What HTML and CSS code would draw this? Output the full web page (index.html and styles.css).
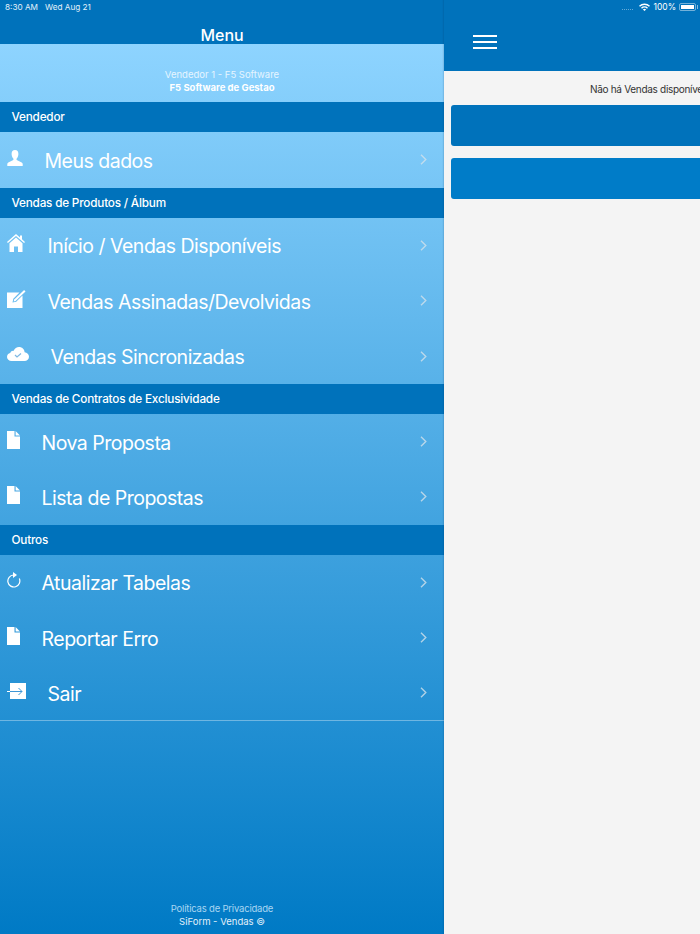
FILE: index.html
```html
<!DOCTYPE html>
<html lang="pt">
<head>
<meta charset="utf-8">
<title>SiForm - Vendas</title>
<link rel="stylesheet" href="styles.css">
</head>
<body>
<svg class="defs" width="0" height="0" aria-hidden="true">
  <symbol id="chev" viewBox="0 0 7 11"><path d="M1 .8 5.800 5.500 1 10.200" fill="none" stroke="currentColor" stroke-width="1.400"/></symbol>
  <symbol id="file" viewBox="0 0 13 18"><path d="M0 0h7.500v5.500H13V18H0z" fill="#fff"/><path d="M8.600 0 13 4.400H8.600z" fill="#fff"/></symbol>
</svg>
<div class="app">
  <aside class="menu">
    <header class="menu-head">
      <div class="status-left"><span>8:30 AM</span><span>Wed Aug 21</span></div>
      <h1 class="menu-title">Menu</h1>
    </header>
    <div class="profile">
      <div class="profile-name">Vendedor 1 - F5 Software</div>
      <div class="profile-company">F5 Software de Gestao</div>
    </div>

    <h2 class="section">Vendedor</h2>
    <a class="row row-45">
      <span class="ico"><svg width="16" height="16" viewBox="0 0 16 16"><path d="M8 0c2.300 0 3.400 1.700 3.400 3.900 0 1.900-.8 3.500-1.700 4.500-.4.500-.2 1.500.5 1.900l4.500 2.300c.7.400 1 .9 1 1.500V16H.3v-1.900c0-.6.300-1.100 1-1.500l4.500-2.300c.7-.4.900-1.400.5-1.900-.9-1-1.700-2.600-1.700-4.500C4.600 1.700 5.700 0 8 0z" fill="#fff"/></svg></span>
      <span class="label">Meus dados</span>
      <svg class="chev" width="7" height="11"><use href="#chev"/></svg>
    </a>

    <h2 class="section">Vendas de Produtos / Álbum</h2>
    <a class="row row-48">
      <span class="ico"><svg width="18" height="18" viewBox="0 0 18 18"><path d="M9 0 0 8l.9 1L9 1.900 17.100 9l.9-1-3-2.700V1.500h-2v2z" fill="#fff"/><path d="M9 3.400 2.500 9.200V18H7v-5.500h4V18h4.500V9.200z" fill="#fff"/></svg></span>
      <span class="label">Início / Vendas Disponíveis</span>
      <svg class="chev" width="7" height="11"><use href="#chev"/></svg>
    </a>
    <a class="row row-48">
      <span class="ico"><svg width="19" height="18" viewBox="0 0 19 18"><path d="M0 2.500h12.500L6.300 8.800 5.500 12.500l3.700-.8 6.300-6.200V18H0z" fill="#fff"/><path d="m7.200 9.400 9.900-9.400 1.400 1.400-9.900 9.500-2 .5z" fill="#fff"/></svg></span>
      <span class="label">Vendas Assinadas/Devolvidas</span>
      <svg class="chev" width="7" height="11"><use href="#chev"/></svg>
    </a>
    <a class="row row-51">
      <span class="ico"><svg width="22" height="14" viewBox="0 0 22 14"><path d="M4.500 14C2 14 0 12.300 0 10c0-2 1.400-3.500 3.200-3.900C3.800 4.300 5.300 3.600 6.500 3.900 7.700 1.500 9.700 0 12 0c3 0 5.400 2.200 5.600 5.200 2.500.3 4.400 2.200 4.400 4.500 0 2.400-2 4.300-4.500 4.300z" fill="#fff"/><path d="m8 8 2 2 4-3.500" fill="none" stroke="#7fb8e2" stroke-width="1.200"/></svg></span>
      <span class="label">Vendas Sincronizadas</span>
      <svg class="chev" width="7" height="11"><use href="#chev"/></svg>
    </a>

    <h2 class="section">Vendas de Contratos de Exclusividade</h2>
    <a class="row row-42">
      <span class="ico"><svg width="13" height="18"><use href="#file"/></svg></span>
      <span class="label">Nova Proposta</span>
      <svg class="chev" width="7" height="11"><use href="#chev"/></svg>
    </a>
    <a class="row row-42">
      <span class="ico"><svg width="13" height="18"><use href="#file"/></svg></span>
      <span class="label">Lista de Propostas</span>
      <svg class="chev" width="7" height="11"><use href="#chev"/></svg>
    </a>

    <h2 class="section">Outros</h2>
    <a class="row row-42">
      <span class="ico"><svg width="14" height="16" viewBox="0 0 14 16"><path d="M6.500 3A6 6 0 1 0 12.300 6.500" fill="none" stroke="#fff" stroke-width="1.200"/><path d="M6 0 10 3 6 6z" fill="#fff"/></svg></span>
      <span class="label">Atualizar Tabelas</span>
      <svg class="chev" width="7" height="11"><use href="#chev"/></svg>
    </a>
    <a class="row row-42">
      <span class="ico"><svg width="13" height="18"><use href="#file"/></svg></span>
      <span class="label">Reportar Erro</span>
      <svg class="chev" width="7" height="11"><use href="#chev"/></svg>
    </a>
    <a class="row row-48 row-last">
      <span class="ico"><svg width="19" height="16" viewBox="0 0 19 16"><rect x="3" y="0" width="16" height="16" fill="#fff"/><path d="M3 8.500h12M11.500 5 15 8.500 11.500 12" fill="none" stroke="#3f97d6" stroke-width="1"/><path d="M0 8.500h3" stroke="#fff" stroke-width="1"/></svg></span>
      <span class="label">Sair</span>
      <svg class="chev" width="7" height="11"><use href="#chev"/></svg>
    </a>

    <footer class="foot">
      <div class="foot-link">Políticas de Privacidade</div>
      <div>SiForm - Vendas ©</div>
    </footer>
  </aside>

  <main class="panel">
    <header class="panel-head">
      <button class="burger" aria-label="Menu"><i></i><i></i><i></i></button>
    </header>
    <p class="empty">Não há Vendas disponíveis</p>
    <div class="card card-dark"></div>
    <div class="card card-light"></div>
  </main>

  <div class="status-right">
    <span class="dots"></span>
    <svg width="11" height="8" viewBox="0 0 11 8"><path d="M0 2.800A7.800 7.800 0 0 1 11 2.800L10 3.800A6.400 6.400 0 0 0 1 3.800zM2 4.800A5 5 0 0 1 9 4.800L8 5.800A3.600 3.600 0 0 0 3 5.800zM3.900 6.600A2.300 2.300 0 0 1 7.100 6.600L5.500 8z" fill="#fff"/></svg>
    <span>100%</span>
    <span class="battery"><i></i></span>
  </div>
</div>
</body>
</html>
```
FILE: styles.css
```css
* { box-sizing: border-box; }
html, body { margin: 0; padding: 0; }
body {
  width: 700px;
  height: 934px;
  overflow: hidden;
  font-family: Inter, "Liberation Sans", sans-serif;
  color: #fff;
  background: #f4f4f4;
}
.defs { position: absolute; }
.app { position: relative; display: flex; width: 700px; height: 934px; overflow: hidden; }

.menu {
  flex: 0 0 444px;
  height: 934px;
  display: flex;
  flex-direction: column;
  background: linear-gradient(180deg, #8ed4ff 44px, #007ac5 100%);
}
.menu-head { height: 44px; background: #0072bb; position: relative; }
.status-left {
  display: flex;
  gap: 7px;
  padding: 2px 0 0 5px;
  font-size: 8.200px;
  line-height: 11px;
  color: #e3f1fa;
}
.menu-title {
  margin: 0;
  padding-top: 14px;
  text-align: center;
  font-size: 16px;
  line-height: 16px;
  font-weight: 500;
}
.profile {
  height: 58px;
  padding-top: 25px;
  text-align: center;
  font-size: 9.500px;
  line-height: 12.500px;
}
.profile-name { color: #e6f5ff; }
.profile-company { font-weight: 700; }
.section {
  margin: 0;
  height: 30.200px;
  padding-left: 11.500px;
  background: #0072bb;
  font-size: 11.750px;
  line-height: 31px;
  font-weight: 500;
  letter-spacing: -.2px;
}
.row {
  position: relative;
  display: flex;
  align-items: center;
  height: 55.330px;
  padding-right: 17px;
}
.row-last { border-bottom: 1px solid rgba(255,255,255,.35); }
.ico { display: flex; padding-left: 7px; margin-top: -4px; }
.row-45 .ico { width: 45px; }
.row-48 .ico { width: 48px; }
.row-51 .ico { width: 51px; }
.row-42 .ico { width: 42px; }
.label { flex: 1; margin: 2px 0 0 -.5px; font-size: 19.500px; line-height: 24px; letter-spacing: -.5px; }
.chev { color: rgba(210,225,235,.8); margin-top: 0; }

.foot {
  margin-top: auto;
  padding-bottom: 6px;
  text-align: center;
  font-size: 9.500px;
  line-height: 12.500px;
  color: #e0f0fa;
}
.foot-link { color: #a9d6f2; letter-spacing: -.2px; }

.panel {
  flex: 0 0 444px;
  height: 934px;
  background: #f4f4f4;
  box-shadow: -1px 0 1px rgba(0,40,80,.12);
  position: relative;
}
.panel-head {
  height: 71px;
  background: #0072bb;
  padding: 35px 0 0 29px;
}
.burger {
  display: flex;
  flex-direction: column;
  gap: 4px;
  width: 24px;
  padding: 0;
  border: 0;
  background: none;
}
.burger i { display: block; width: 24px; height: 2px; background: #fff; }
.empty {
  margin: 0;
  height: 34px;
  padding: 12px 0 0 146px;
  font-size: 10px;
  line-height: 13px;
  letter-spacing: -.3px;
  white-space: nowrap;
  color: #333;
}
.card { height: 41px; margin: 0 0 12px 7px; border-radius: 3px; }
.card-dark { background: #0072bb; }
.card-light { background: #007cc8; }

.status-right {
  position: absolute;
  top: 1px;
  right: 4px;
  display: flex;
  align-items: center;
  gap: 3px;
  height: 12px;
  font-size: 8.500px;
}
.dots { width: 11px; height: 1px; margin: 4px 3px 0 0; border-top: 1px dotted rgba(255,255,255,.4); }
.battery {
  position: relative;
  display: block;
  width: 17px;
  height: 8px;
  padding: 1px;
  border: 1px solid rgba(255,255,255,.45);
  border-radius: 2px;
}
.battery::after {
  content: "";
  position: absolute;
  top: 1px;
  right: -3px;
  width: 1px;
  height: 4px;
  background: rgba(255,255,255,.5);
}
.battery i { display: block; width: 100%; height: 100%; background: #fff; }
```
